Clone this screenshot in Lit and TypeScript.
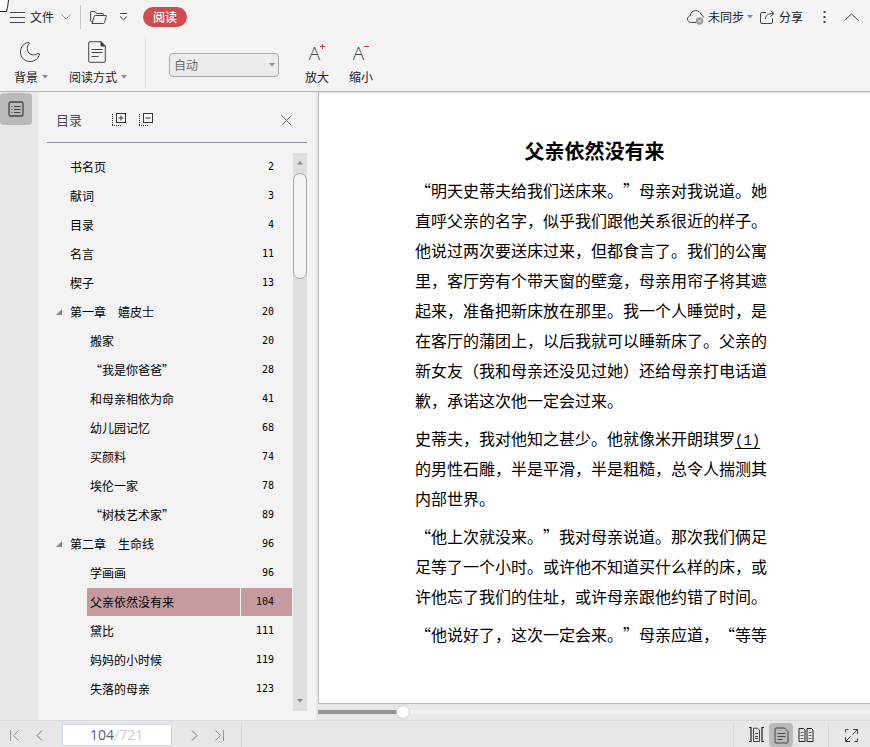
import { LitElement, html, css, svg } from "lit";
import { customElement, state } from "lit/decorators.js";
import { classMap } from "lit/directives/class-map.js";

interface Entry {
  title: string;
  page: number;
  level: 0 | 1;
  open?: boolean;
}

const ENTRIES: Entry[] = [
  { title: "书名页", page: 2, level: 0 },
  { title: "献词", page: 3, level: 0 },
  { title: "目录", page: 4, level: 0 },
  { title: "名言", page: 11, level: 0 },
  { title: "楔子", page: 13, level: 0 },
  { title: "第一章　嬉皮士", page: 20, level: 0, open: true },
  { title: "搬家", page: 20, level: 1 },
  { title: "“我是你爸爸”", page: 28, level: 1 },
  { title: "和母亲相依为命", page: 41, level: 1 },
  { title: "幼儿园记忆", page: 68, level: 1 },
  { title: "买颜料", page: 74, level: 1 },
  { title: "埃伦一家", page: 78, level: 1 },
  { title: "“树枝艺术家”", page: 89, level: 1 },
  { title: "第二章　生命线", page: 96, level: 0, open: true },
  { title: "学画画", page: 96, level: 1 },
  { title: "父亲依然没有来", page: 104, level: 1 },
  { title: "黛比", page: 111, level: 1 },
  { title: "妈妈的小时候", page: 119, level: 1 },
  { title: "失落的母亲", page: 123, level: 1 },
];

const PAGES = 721;

const icon = (w: number, h: number, body: unknown) =>
  html`<svg class="icon" width=${w} height=${h} viewBox="0 0 ${w} ${h}" aria-hidden="true">${body}</svg>`;

const caret = icon(6, 4, svg`<path d="M0 0h6L3 3.5z" fill="#8a8a8a" stroke="none"/>`);
const menuIcon = icon(15, 11, svg`<path d="M0 .5h15M0 5.500h15M0 10.500h15"/>`);
const chevronDown = icon(10, 6, svg`<path d="M.5.5 5 5 9.500.5" stroke="#999"/>`);
const folderIcon = icon(17, 13, svg`<path d="M2.500 11.500 .6 10V1.200Q.6.5 1.300.5H5l1.500 2h6.200q.8 0 .8.8v1.200M2 12.500 4.300 5.200q.2-.7.900-.7H16q.6 0 .4.6l-2 6.700q-.2.700-.9.700z"/>`);
const moreIcon = icon(9, 8, svg`<path d="M1 .5h7M1 3.500l3.500 3.300L8 3.500"/>`);
const cloudIcon = icon(18, 15, svg`<path d="M9 12.500H4.500C2 12.500.5 11 .5 9c0-1.800 1.200-3 2.800-3.400C3.500 2.600 5.800.6 8.700.6c2.600 0 4.600 1.500 5.300 3.900 1.400.4 2.300 1.500 2.300 3"/><circle cx="12.500" cy="11" r="3.700" fill="#999" stroke="none"/><path d="m11 9.500 3 3m0-3-3 3" stroke="#f3f3f3"/>`);
const shareIcon = icon(15, 14, svg`<path d="M6 2.500H2Q.5 2.500.5 4v8q0 1.500 1.500 1.500h9q1.500 0 1.500-1.500V8.500M5.500 9C5.500 5.500 8 3.500 13.500 3.500M10.500.5l3.500 3-3.500 3"/>`);
const dotsIcon = icon(3, 13, svg`<path d="M1.500 0v2M1.500 5v2M1.500 10v2" stroke-width="2"/>`);
const collapseIcon = icon(15, 8, svg`<path d="M.5 7.500l7-6.500 7 6.500"/>`);
const moonIcon = icon(22, 22, svg`<path d="M10 1.500C6 1.500 1.500 5 1.500 11c0 5.500 4.400 9.500 9.500 9.500 4.800 0 8.800-3 9.500-7.700l-1.600-.4c-1.500 1.200-3 1.500-4.300 1.500-3.800-.2-6.300-2.700-6.300-6.200 0-2.200.7-4 2.200-5.700z"/>`);
const docIcon = icon(18, 22, svg`<path d="M13 .7H2Q.7.7.7 2v18q0 1.300 1.300 1.300h14q1.300 0 1.300-1.300V5M3.500 8.500h11M3.500 11.500h11M3.500 15.500h7"/><path d="M13 .5V5h4.300z" fill="#333"/>`);
const outlineIcon = icon(16, 16, svg`<rect x="1" y="1" width="14" height="14" rx="1.500" stroke-width="1.300"/><path d="M3.500 5.500h1M6 5.500h6.500M3.500 8.500h1M6 8.500h6.500M3.500 11.500h1M6 11.500h6.500"/>`);
const treeIcon = (plus: boolean) =>
  icon(15, 14, svg`<path d="M1.500 1v12M1 12.500h9.500" stroke-dasharray="1 1"/><rect x="5.500" y=".5" width="9" height="9"/><path d="M7.500 5h5${plus ? "M10 2.500v5" : ""}"/>`);
const closeIcon = icon(11, 11, svg`<path d="m.5.5 10 10m0-10-10 10" stroke="#777"/>`);
const expander = icon(6, 6, svg`<path d="M6 0v6H0z" fill="#888" stroke="none"/>`);
const prevIcon = icon(7, 11, svg`<path d="M6 .5 1 5.500l5 5"/>`);
const nextIcon = icon(7, 11, svg`<path d="m1 .5 5 5-5 5"/>`);
const firstIcon = icon(11, 11, svg`<path d="M1.500 0v11M9.500.5l-5 5 5 5"/>`);
const lastIcon = icon(11, 11, svg`<path d="M9.500 0v11M1.500.5l5 5-5 5"/>`);
const spreadIcon = icon(17, 16, svg`<path d="M1 .5h2v14H1M16 .5h-2v14h2" stroke="#222" stroke-width="1.200"/><path d="M5.500 1.200h4l2 2v11.300h-6zM7 6.500h3M7 9.500h3M7 11.500h3"/>`);
const singleIcon = icon(15, 17, svg`<path d="M10.500 1H2Q1 1 1 2v13q0 1 1 1h11q1 0 1-1V4.500zM3.500 6.500h8M3.500 9.500h8M3.500 12.500h5"/>`);
const twoIcon = icon(16, 16, svg`<path d="M1 1.500h4.500l1.500 1.500v11.500H1zM9 1.500h4.500L15 3v11.500H9z" stroke="#222"/><path d="M2.500 5.500h3M2.500 8.500h3M2.500 11.500h3M10.500 5.500h3M10.500 8.500h3M10.500 11.500h3" stroke-width=".8"/>`);
const fullIcon = icon(15, 15, svg`<path d="M9 1.500h4.500V6M13.500 1.500l-5 5M6 13.500H1.500V9M1.500 13.500l5-5M1.500 4.500v-3h3M13.500 10.500v3h-3"/>`);

@customElement("toc-panel")
export class TocPanel extends LitElement {
  static properties = { current: { type: Number } };
  declare current: number;

  static styles = css`
    :host { display: flex; flex-direction: column; padding: 0 9px 9px; box-sizing: border-box; background: #f3f3f3; }
    button { border: 0; padding: 0; background: none; font: inherit; color: inherit; display: flex; }
    .icon { display: block; fill: none; stroke: #333; }
    .head { display: flex; align-items: center; height: 51px; padding: 6px 15px 0 9px; box-sizing: border-box; border-bottom: 1px solid #928e9e; color: #4d4a57; }
    .head h2 { margin: 0; flex: 0 0 55px; font-size: 13px; font-weight: 400; line-height: 20px; }
    .tree { margin-right: 12px; }
    .close { margin-left: auto; }
    .body { display: flex; flex: 1; margin-top: 10px; }
    ol { list-style: none; margin: 0; padding: 0; flex: 1; color: #000; }
    li { display: flex; align-items: center; height: 28px; margin-bottom: 1px; padding-left: 20px; }
    li.child { padding-left: 40px; }
    .mark { width: 11px; margin-left: -11px; }
    .row { display: flex; flex: 1; gap: 1px; height: 28px; line-height: 28px; margin-right: 1px; color: inherit; text-decoration: none; }
    .name { flex: 1; padding-left: 3px; }
    .num { width: 51px; padding-right: 18px; box-sizing: border-box; text-align: right; font-family: "DejaVu Sans Mono", monospace; font-size: 10px; }
    .active .name, .active .num { background: #c69a9f; }
    .bar { display: flex; flex-direction: column; width: 14px; background: #dedede; align-items: center; }
    .bar button { height: 20px; width: 14px; align-items: center; justify-content: center; }
    .thumb { width: 14px; height: 106px; box-sizing: border-box; border: 1px solid #a5a5a5; border-radius: 7px; background: #f3f3f3; margin-bottom: auto; }
  `;

  render() {
    return html`
      <div class="head">
        <h2>目录</h2>
        <button class="tree" aria-label="展开">${treeIcon(true)}</button>
        <button class="tree" aria-label="折叠">${treeIcon(false)}</button>
        <button class="close" aria-label="关闭">${closeIcon}</button>
      </div>
      <div class="body">
        <ol>
          ${ENTRIES.map((e) => html`
            <li class=${classMap({ child: e.level === 1, active: e.title === "父亲依然没有来" && e.page === this.current })}>
              ${e.open ? html`<span class="mark">${expander}</span>` : ""}
              <a class="row" href="#p${e.page}"><span class="name">${e.title}</span><span class="num">${e.page}</span></a>
            </li>`)}
        </ol>
        <div class="bar">
          <button aria-label="向上">${icon(6, 4, svg`<path d="M0 3.500h6L3 0z" fill="#888" stroke="none"/>`)}</button>
          <div class="thumb"></div>
          <button aria-label="向下">${caret}</button>
        </div>
      </div>`;
  }
}

@customElement("app-root")
export class AppRoot extends LitElement {
  @state() private page = 104;

  static styles = css`
    :host { display: flex; flex-direction: column; min-height: 100vh; position: relative; background: #e7e7e7; color: #222; font: 12px/18px "Noto Sans CJK SC", sans-serif; text-spacing-trim: space-all; }
    button { border: 0; padding: 0; background: none; font: inherit; color: inherit; display: flex; align-items: center; }
    .icon { display: block; flex: none; fill: none; stroke: #444; }
    .corner { position: absolute; left: 0; top: 0; }
    header { background: #f3f3f3; border-bottom: 1px solid #b4b4b4; }
    .top { display: flex; align-items: center; height: 34px; padding: 0 11px 0 10px; }
    .file { gap: 5px; }
    .file .icon:last-child { margin-left: 2px; }
    .sep { width: 1px; height: 24px; background: #c4c4c4; margin: 0 9px; }
    .more { margin-left: 12px; }
    .read { margin-left: 15px; width: 44px; height: 20px; justify-content: center; border-radius: 10px; background: #d14c4c; color: #fff; font-weight: 500; }
    .right { display: flex; align-items: center; margin-left: auto; }
    .sync { gap: 3px; }
    .share { gap: 4px; margin-left: 7px; }
    .dots { margin: 0 18px 0 20px; }
    .ribbon { display: flex; align-items: flex-start; height: 57px; padding-left: 14px; box-sizing: border-box; }
    .tool { flex-direction: column; gap: 5px; padding-top: 7px; }
    .pic { display: flex; align-items: center; height: 22px; }
    .cap { display: flex; align-items: center; gap: 4px; }
    .tool.dd .pic { margin-right: 2px; }
    .mode { margin-left: 21px; }
    .rule { width: 1px; height: 50px; background: #e0e0e0; margin: 3px 23px 0 18px; }
    .zoom { display: grid; align-items: center; width: 110px; margin: 19px 26px 0 0; }
    .zoom > * { grid-area: 1 / 1; }
    .zoom .icon { justify-self: end; margin-right: 4px; }
    select { appearance: none; width: 100%; height: 24px; padding: 0 4px; border: 1px solid #ababab; border-radius: 4px; background: #ececec; color: #666; font: inherit; }
    .size { margin-right: 20px; }
    .size .pic { align-items: flex-start; font: 300 19px/24px "Open Sans", sans-serif; color: #444; }
    .size .icon { stroke: #cc4450; margin: 2px 0 0 0; }
    .work { display: flex; flex: 1; }
    .rail { width: 38px; background: #e7e7e7; }
    .rail button { width: 32px; height: 32px; margin-top: 1px; border-radius: 4px; justify-content: center; background: #bababa; }
    toc-panel { flex: 0 0 278px; }
    main { display: flex; flex-direction: column; flex: 1; min-width: 0; padding-left: 2px; }
    article { flex: 1; border: 1px solid #bababa; border-width: 0 0 1px 1px; background: #fff; padding: 44px 96px 0; color: #000; box-shadow: inset 0 3px 3px -2px #ddd; }
    h1 { margin: 0 0 9px; font-size: 20px; line-height: 30px; text-align: center; }
    p { margin: 0 0 8px; font-size: 16px; line-height: 30px; }
    article a { color: inherit; font: 14px "Liberation Mono", monospace; text-underline-offset: 3px; }
    .slide { appearance: none; display: block; width: 100%; height: 14px; margin: 1px 0; background: none; }
    .slide::-webkit-slider-runnable-track { height: 4px; background: linear-gradient(90deg, #949694 var(--done), #f3f3f3 var(--done)); }
    .slide::-webkit-slider-thumb { appearance: none; width: 14px; height: 14px; margin-top: -5px; border: 1px solid #ccc; border-radius: 50%; background: #fff; }
    footer { display: flex; align-items: center; height: 27px; box-sizing: border-box; border-top: 1px solid #d9d9d9; padding: 2px 6px 0 9px; }
    .nav .icon { stroke: #66708a; }
    .nav.end .icon { stroke: #8d93a3; }
    .prev, .last { margin-left: 16px; }
    .last { margin-right: 16px; }
    .goto { display: flex; align-items: center; width: 110px; height: 22px; box-sizing: border-box; border: 1px solid #ccd7ea; background: #fff; margin: 0 19px; font: 14px/20px "Open Sans", sans-serif; color: #ccc; }
    .goto input { width: 51px; box-sizing: border-box; padding: 0; border: 0; background: none; font: inherit; color: #555f75; text-align: right; outline: 0; }
    .tall { width: 1px; align-self: stretch; background: #d6d6d6; }
    .views { display: flex; align-items: center; margin-left: auto; align-self: stretch; }
    .views button { width: 26px; height: 24px; justify-content: center; }
    .views .on { width: 24px; border-radius: 4px; background: #bababa; }
    .views .tall { margin: 0 9px; }
  `;

  private setPage(e: Event) {
    const n = Number((e.target as HTMLInputElement).value);
    if (n >= 1 && n <= PAGES) this.page = n;
  }

  render() {
    return html`
      <header>
        <svg class="corner" width="10" height="13" viewBox="0 0 10 13" aria-hidden="true"><path d="M0 0h8.500Q8 6 6.500 11.500H0z" fill="#fff"/><path d="M8.500 0Q8 6 6.500 11.500H0" fill="none" stroke="#223"/></svg>
        <div class="top">
          <button class="file">${menuIcon}<span>文件</span>${chevronDown}</button>
          <span class="sep"></span>
          <button aria-label="打开">${folderIcon}</button>
          <button class="more" aria-label="更多">${moreIcon}</button>
          <button class="read">阅读</button>
          <div class="right">
            <button class="sync">${cloudIcon}<span>未同步</span>${caret}</button>
            <button class="share">${shareIcon}<span>分享</span></button>
            <button class="dots" aria-label="菜单">${dotsIcon}</button>
            <button aria-label="收起">${collapseIcon}</button>
          </div>
        </div>
        <div class="ribbon">
          <button class="tool dd"><span class="pic">${moonIcon}</span><span class="cap">背景${caret}</span></button>
          <button class="tool dd mode"><span class="pic">${docIcon}</span><span class="cap">阅读方式${caret}</span></button>
          <span class="rule"></span>
          <div class="zoom"><select aria-label="缩放"><option>自动</option></select>${caret}</div>
          <button class="tool size"><span class="pic">A${icon(5, 6, svg`<path d="M0 3.500h5M2.500 1v5"/>`)}</span><span class="cap">放大</span></button>
          <button class="tool size"><span class="pic">A${icon(5, 6, svg`<path d="M0 3.500h5"/>`)}</span><span class="cap">缩小</span></button>
        </div>
      </header>
      <div class="work">
        <div class="rail"><button aria-label="目录面板">${outlineIcon}</button></div>
        <toc-panel .current=${this.page}></toc-panel>
        <main>
          <article lang="zh-CN">
            <h1>父亲依然没有来</h1>
            <p>“明天史蒂夫给我们送床来。”母亲对我说道。她直呼父亲的名字，似乎我们跟他关系很近的样子。他说过两次要送床过来，但都食言了。我们的公寓里，客厅旁有个带天窗的壁龛，母亲用帘子将其遮起来，准备把新床放在那里。我一个人睡觉时，是在客厅的蒲团上，以后我就可以睡新床了。父亲的新女友（我和母亲还没见过她）还给母亲打电话道歉，承诺这次他一定会过来。</p>
            <p>史蒂夫，我对他知之甚少。他就像米开朗琪罗<a href="#note1">(1)</a>的男性石雕，半是平滑，半是粗糙，总令人揣测其内部世界。</p>
            <p>“他上次就没来。”我对母亲说道。那次我们俩足足等了一个小时。或许他不知道买什么样的床，或许他忘了我们的住址，或许母亲跟他约错了时间。</p>
            <p>“他说好了，这次一定会来。”母亲应道，“等等</p>
          </article>
          <input class="slide" type="range" aria-label="阅读进度" min="0" max=${PAGES} .value=${String(this.page)} style="--done: ${(this.page / PAGES) * 100}%" @input=${this.setPage} />
        </main>
      </div>
      <footer>
        <button class="nav end" aria-label="首页">${firstIcon}</button>
        <button class="nav prev" aria-label="上一页">${prevIcon}</button>
        <label class="goto"><input aria-label="页码" .value=${String(this.page)} @change=${this.setPage} /><span>/${PAGES}</span></label>
        <button class="nav next" aria-label="下一页">${nextIcon}</button>
        <button class="nav end last" aria-label="末页">${lastIcon}</button>
        <span class="tall"></span>
        <div class="views">
          <span class="tall"></span>
          <button aria-label="连续">${spreadIcon}</button>
          <button class="on" aria-label="单页">${singleIcon}</button>
          <button aria-label="双页">${twoIcon}</button>
          <span class="tall"></span>
          <button aria-label="全屏">${fullIcon}</button>
        </div>
      </footer>`;
  }
}
